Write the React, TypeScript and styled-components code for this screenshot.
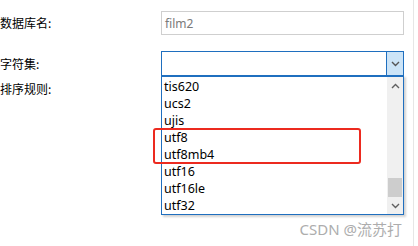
import React from "react";
import styled, { createGlobalStyle } from "styled-components";

const GlobalStyle = createGlobalStyle`
  html, body {
    margin: 0;
    padding: 0;
    background: #ffffff;
    overflow: hidden;
  }
`;

const Page = styled.div`
  position: relative;
  width: 413px;
  height: 246px;
  border-right: 1px solid #e6e6e6;
  font-family: "Noto Sans", "Noto Sans CJK SC", sans-serif;
  color: #000;
`;

const Form = styled.div`
  display: flex;
  flex-direction: column;
  padding-top: 11px;
`;

const Row = styled.div<{ $mt?: number; $h: number }>`
  display: grid;
  grid-template-columns: 161px 243px;
  align-items: center;
  height: ${(p) => p.$h}px;
  margin-top: ${(p) => p.$mt ?? 0}px;
`;

const Label = styled.span`
  font-family: "Noto Sans CJK SC", sans-serif;
  font-size: 12px;
  line-height: 16px;
  white-space: nowrap;
`;

const TextInput = styled.div`
  box-sizing: border-box;
  height: 24px;
  border: 1px solid #cfcfcf;
  padding-left: 3px;
  display: flex;
  align-items: center;
  font-size: 12px;
  color: #7a7a7a;
`;

const Select = styled.div`
  box-sizing: border-box;
  height: 25px;
  border: 1px solid #1f6fbf;
  display: flex;
  justify-content: flex-end;
`;

const SelectButton = styled.div`
  box-sizing: border-box;
  width: 17px;
  height: 100%;
  background: #cce4f7;
  border-left: 1px solid #1f6fbf;
  display: flex;
  align-items: center;
  justify-content: center;
`;

const Dropdown = styled.div`
  position: absolute;
  left: 161px;
  top: 75px;
  box-sizing: border-box;
  width: 243px;
  height: 140px;
  border: 1px solid #1f6fbf;
  border-top-width: 2px;
  background: #fff;
  box-shadow: 2px 2px 2px rgba(0, 0, 0, 0.18);
  display: flex;
`;

const List = styled.div`
  flex: 1;
  display: flex;
  flex-direction: column;
  padding-top: 1px;
`;

const Item = styled.div`
  height: 17px;
  line-height: 17px;
  padding-left: 2px;
  font-size: 12.5px;
  color: #000;
`;

const Scrollbar = styled.div`
  width: 16px;
  background: #f0f0f0;
  display: flex;
  flex-direction: column;
`;

const ScrollArrow = styled.div`
  height: 17px;
  display: flex;
  align-items: center;
  justify-content: center;
`;

const Track = styled.div`
  flex: 1;
  display: flex;
  flex-direction: column;
  justify-content: flex-end;
`;

const Thumb = styled.div`
  height: 19px;
  margin: 0 1px;
  background: #cdcdcd;
`;

const Highlight = styled.div`
  position: absolute;
  left: 153px;
  top: 128px;
  width: 208px;
  height: 36px;
  box-sizing: border-box;
  border: 2px solid #ec2a1f;
  border-radius: 3px;
`;

const Watermark = styled.div`
  position: absolute;
  right: 11px;
  top: 220px;
  font-family: "Noto Sans", "Noto Sans CJK SC", sans-serif;
  font-size: 15px;
  line-height: 18px;
  color: #adadad;
  white-space: nowrap;
`;

const Chevron = ({ up, color }: { up?: boolean; color: string }) => (
  <svg width="9" height="6" viewBox="0 0 9 6">
    <path
      d={up ? "M1 5 L4.5 1.5 L8 5" : "M1 1 L4.5 4.5 L8 1"}
      fill="none"
      stroke={color}
      strokeWidth="1.4"
    />
  </svg>
);

const charsets = ["tis620", "ucs2", "ujis", "utf8", "utf8mb4", "utf16", "utf16le", "utf32"];

const App = () => {
  return (
    <Page>
      <GlobalStyle />
      <Form>
        <Row $h={24}>
          <Label>数据库名:</Label>
          <TextInput>film2</TextInput>
        </Row>
        <Row $h={25} $mt={16}>
          <Label>字符集:</Label>
          <Select>
            <SelectButton>
              <Chevron color="#555" />
            </SelectButton>
          </Select>
        </Row>
        <Row $h={16} $mt={5}>
          <Label>排序规则:</Label>
        </Row>
      </Form>
      <Dropdown>
        <List>
          {charsets.map((c) => (
            <Item key={c}>{c}</Item>
          ))}
        </List>
        <Scrollbar>
          <ScrollArrow>
            <Chevron up color="#606060" />
          </ScrollArrow>
          <Track>
            <Thumb />
          </Track>
          <ScrollArrow>
            <Chevron color="#606060" />
          </ScrollArrow>
        </Scrollbar>
      </Dropdown>
      <Highlight />
      <Watermark>CSDN @流苏打</Watermark>
    </Page>
  );
};

export default App;
